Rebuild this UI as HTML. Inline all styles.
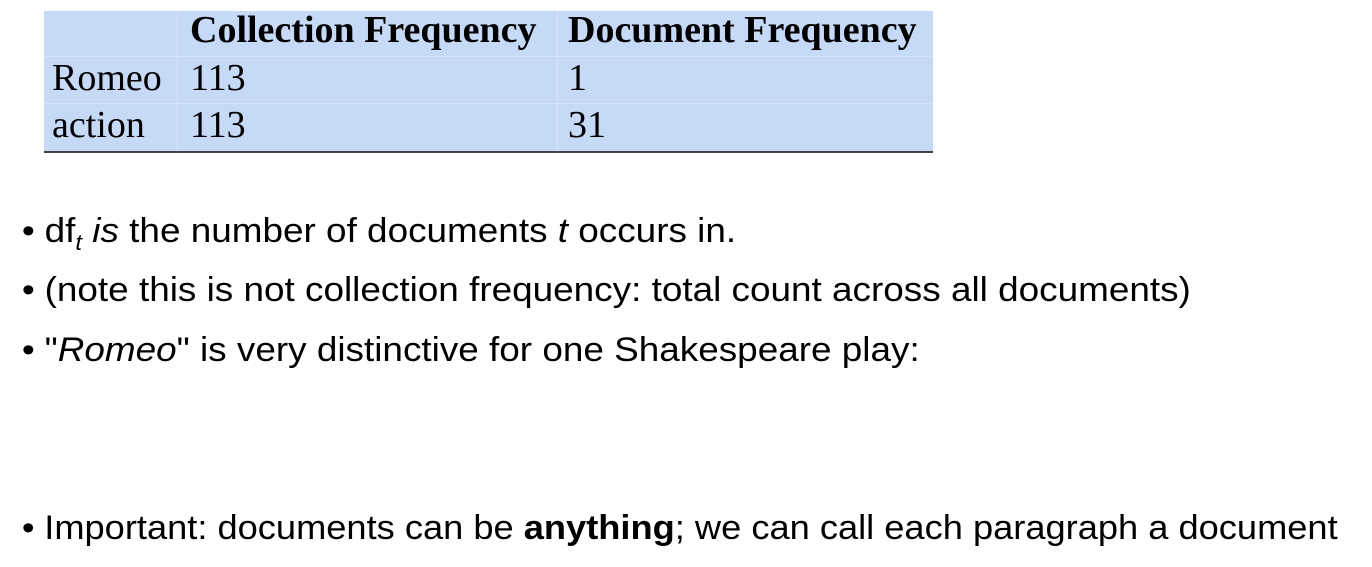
<!DOCTYPE html>
<html><head><style>
html,body{margin:0;padding:0;background:#fff;width:1372px;height:567px;overflow:hidden;position:relative}
.tbl{position:absolute;left:44px;top:11px;width:889px;height:140px;background:#c6daf8;border-bottom:2px solid #444;font-family:"Liberation Serif",serif;font-size:38px;color:#000}
.c{position:absolute;white-space:nowrap;line-height:44px}
.vl{position:absolute;top:0;height:140px;width:1px;background:#d6e4fa}
.hl{position:absolute;left:0;width:889px;height:1px;background:#d6e4fa}
.b{position:absolute;left:24px;font-family:"Liberation Sans",sans-serif;font-size:34px;white-space:nowrap;color:#000;transform-origin:0 0;transform:scaleX(1.085)}
.b:before{content:"•";position:absolute;left:-2px}
.b span.t{padding-left:19px}
</style></head><body>
<div class="tbl">
<div class="vl" style="left:133px"></div><div class="vl" style="left:513px"></div>
<div class="hl" style="top:45px"></div><div class="hl" style="top:92px"></div>
<div class="c" style="left:146px;top:-3px;font-weight:bold">Collection Frequency</div>
<div class="c" style="left:524px;top:-3px;font-weight:bold">Document Frequency</div>
<div class="c" style="left:8px;top:45px">Romeo</div>
<div class="c" style="left:146px;top:45px">113</div>
<div class="c" style="left:524px;top:45px">1</div>
<div class="c" style="left:8px;top:92px">action</div>
<div class="c" style="left:146px;top:92px">113</div>
<div class="c" style="left:524px;top:92px">31</div>
</div>
<div class="b" style="top:212px"><span class="t">df<sub style="font-size:22px;font-style:italic">t</sub> <i>is</i> the number of documents <i>t</i> occurs in.</span></div>
<div class="b" style="top:271px"><span class="t">(note this is not collection frequency: total count across all documents)</span></div>
<div class="b" style="top:331px"><span class="t">"<i>Romeo</i>" is very distinctive for one Shakespeare play:</span></div>
<div class="b" style="top:509px;transform:scaleX(1.066)"><span class="t">Important: documents can be <b>anything</b>; we can call each paragraph a document</span></div>
</body></html>
